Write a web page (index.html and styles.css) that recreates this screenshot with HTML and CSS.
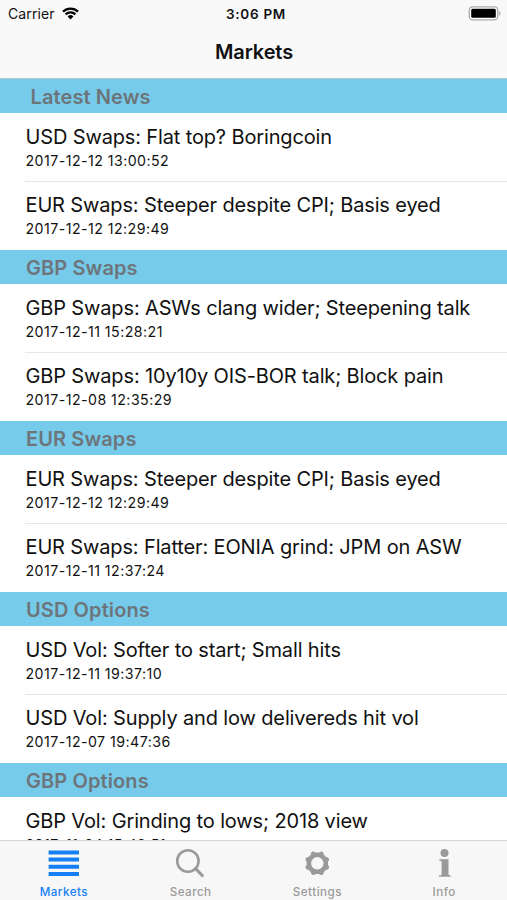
FILE: index.html
```html
<!DOCTYPE html>
<html lang="en">

<head>
  <meta charset="utf-8">
  <meta name="viewport" content="width=device-width, initial-scale=1.0">
  <title>Markets</title>
  <link rel="stylesheet" href="styles.css">
</head>

<body>
  <div class="app">
    <header class="top">
      <div class="status">
        <div class="carrier">
          <span>Carrier</span>
          <svg width="17" height="13" viewBox="0 0 17 13">
            <path d="M1 4.6a10.8 10.8 0 0 1 15 0M3.6 7.4a7 7 0 0 1 9.8 0" fill="none" stroke="#000" stroke-width="2.2"/>
            <path d="M5.6 9.4a4.2 4.2 0 0 1 5.8 0L8.5 12.4z"/>
          </svg>
        </div>
        <div class="time">3:06 PM</div>
        <div class="battery">
          <svg width="33" height="15" viewBox="0 0 33 15">
            <rect x="1.3" y=".8" width="28.5" height="13" rx="3.5" fill="#fff" stroke="#aaa" stroke-width="1.3"/>
            <rect x="3.2" y="2.8" width="24.6" height="9" rx="1.5"/>
            <path d="M31.3 5q1.2 1 1.2 2.4t-1.2 2.4z" fill="#999"/>
          </svg>
        </div>
      </div>
      <h1 class="title">Markets</h1>
    </header>

    <main class="list">
      <section>
        <h2 class="heading first">Latest News</h2>
        <div class="item">
          <div class="name">USD Swaps: Flat top? Boringcoin</div>
          <div class="date">2017-12-12 13:00:52</div>
        </div>
        <div class="item">
          <div class="name">EUR Swaps: Steeper despite CPI; Basis eyed</div>
          <div class="date">2017-12-12 12:29:49</div>
        </div>
      </section>
      <section>
        <h2 class="heading">GBP Swaps</h2>
        <div class="item">
          <div class="name">GBP Swaps: ASWs clang wider; Steepening talk</div>
          <div class="date">2017-12-11 15:28:21</div>
        </div>
        <div class="item">
          <div class="name">GBP Swaps: 10y10y OIS-BOR talk; Block pain</div>
          <div class="date">2017-12-08 12:35:29</div>
        </div>
      </section>
      <section>
        <h2 class="heading">EUR Swaps</h2>
        <div class="item">
          <div class="name">EUR Swaps: Steeper despite CPI; Basis eyed</div>
          <div class="date">2017-12-12 12:29:49</div>
        </div>
        <div class="item">
          <div class="name">EUR Swaps: Flatter: EONIA grind: JPM on ASW</div>
          <div class="date">2017-12-11 12:37:24</div>
        </div>
      </section>
      <section>
        <h2 class="heading">USD Options</h2>
        <div class="item">
          <div class="name">USD Vol: Softer to start; Small hits</div>
          <div class="date">2017-12-11 19:37:10</div>
        </div>
        <div class="item">
          <div class="name">USD Vol: Supply and low delivereds hit vol</div>
          <div class="date">2017-12-07 19:47:36</div>
        </div>
      </section>
      <section>
        <h2 class="heading">GBP Options</h2>
        <div class="item">
          <div class="name">GBP Vol: Grinding to lows; 2018 view</div>
          <div class="date">2017-11-24 15:42:51</div>
        </div>
      </section>
    </main>

    <nav class="tabs">
      <a class="tab active">
        <svg width="32" height="32" viewBox="0 0 32 32">
          <path d="M1.6 5.5H32M1.6 12.6H32M1.6 19.8H32M1.6 27H32" stroke="currentColor" stroke-width="4"/>
        </svg>
        <span>Markets</span>
      </a>
      <a class="tab">
        <svg width="32" height="32" viewBox="0 0 32 32">
          <circle cx="13.9" cy="14" r="10.7" fill="none" stroke="currentColor" stroke-width="2.6"/>
          <path d="M21.5 21.5l6.7 7" stroke="currentColor" stroke-width="3.2" stroke-linecap="round"/>
        </svg>
        <span>Search</span>
      </a>
      <a class="tab">
        <svg width="32" height="32" viewBox="0 0 32 32">
          <g transform="translate(16.3 16.3)" stroke="currentColor" fill="none">
            <circle r="8.5" stroke-width="4.6"/>
            <path d="M-3.9-9.3l.4.9M3.9-9.3l-.4.9M-3.9 9.3l.4-.9M3.9 9.3l-.4-.9M-9.3-3.9l.9.4M-9.3 3.9l.9-.4M9.3-3.9l-.9.4M9.3 3.9l-.9-.4" stroke-width="4.8" stroke-linecap="round"/>
          </g>
        </svg>
        <span>Settings</span>
      </a>
      <a class="tab">
        <svg width="32" height="32" viewBox="0 0 32 32" fill="currentColor">
          <circle cx="16.5" cy="6" r="4"/>
          <path d="M11.3 12.3h9.2v14.9q0 1.2 2.2 1.3v1.3H10.9v-1.3q2.7-.1 2.7-1.3V15q0-1.2-2.3-1.4z"/>
        </svg>
        <span>Info</span>
      </a>
    </nav>
  </div>
</body>

</html>
```
FILE: styles.css
```css
body {
  margin: 0;
  background: #fff;
  color: #111;
  font-family: Inter, "Liberation Sans", sans-serif;
}

h1, h2 {
  margin: 0;
}

.app {
  display: flex;
  flex-direction: column;
  height: 900px;
  overflow: hidden;
}

.top {
  flex: none;
  height: 79px;
  box-sizing: border-box;
  background: #f9f9f9;
  border-bottom: 1px solid #b4c4cb;
}

.status {
  display: grid;
  grid-template-columns: 1fr auto 1fr;
  align-items: center;
  height: 27px;
  padding: 0 6px 0 8px;
  font-size: 14px;
}

.carrier {
  display: flex;
  align-items: center;
  gap: 7px;
  letter-spacing: 0.1px;
}

.time {
  padding-left: 3px;
  font-weight: 600;
  font-size: 13.5px;
  letter-spacing: 0.7px;
}

.battery {
  display: flex;
  justify-content: flex-end;
}

.title {
  height: 51px;
  line-height: 50px;
  padding-left: 1px;
  text-align: center;
  font-size: 20px;
  font-weight: 600;
  letter-spacing: -0.1px;
}

.list {
  flex: 1;
  min-height: 0;
  overflow: hidden;
}

.heading {
  height: 34px;
  line-height: 36px;
  padding-left: 26px;
  background: #76cbea;
  color: #6d757b;
  font-size: 20px;
  font-weight: 600;
  letter-spacing: 0.1px;
}

.heading.first {
  padding-left: 30.5px;
}

.item {
  height: 68px;
  margin-left: 25px;
  padding: 11px 0 0 0.5px;
  box-sizing: border-box;
  white-space: nowrap;
}

.item + .item {
  height: 69px;
  padding-top: 10px;
  border-top: 1px solid #e6e6e6;
}

.name {
  line-height: 27px;
  font-size: 20px;
  letter-spacing: -0.14px;
}

.date {
  line-height: 19px;
  font-size: 14.2px;
  letter-spacing: 0.45px;
}

.tabs {
  flex: none;
  display: grid;
  grid-template-columns: repeat(4, 1fr);
  height: 60px;
  box-sizing: border-box;
  background: #f7f7f7;
  border-top: 1px solid #d5d5d5;
}

.tab {
  display: flex;
  flex-direction: column;
  align-items: center;
  padding-top: 6px;
  color: #9a9a9a;
  font-size: 11.6px;
  font-weight: 500;
  line-height: 26px;
  letter-spacing: 0.5px;
}

.tab span {
  padding-left: 1px;
}

.tab.active {
  color: #1580f5;
}
```
